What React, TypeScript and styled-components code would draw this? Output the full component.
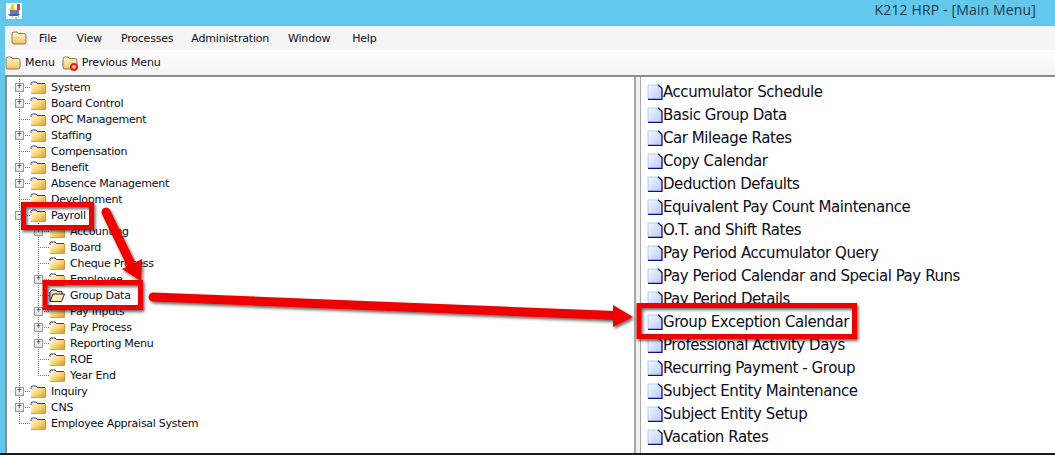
import React from "react";
import styled, { createGlobalStyle } from "styled-components";

const FONT = `"DejaVu Sans", "Noto Sans", sans-serif`;

const treeItems = [
  { label: "System", depth: 0, expander: true },
  { label: "Board Control", depth: 0, expander: true },
  { label: "OPC Management", depth: 0 },
  { label: "Staffing", depth: 0, expander: true },
  { label: "Compensation", depth: 0 },
  { label: "Benefit", depth: 0, expander: true },
  { label: "Absence Management", depth: 0, expander: true },
  { label: "Development", depth: 0 },
  { label: "Payroll", depth: 0, expander: true, open: true },
  { label: "Accounting", depth: 1, expander: true },
  { label: "Board", depth: 1 },
  { label: "Cheque Process", depth: 1 },
  { label: "Employee", depth: 1, expander: true },
  { label: "Group Data", depth: 1, selected: true },
  { label: "Pay Inputs", depth: 1, expander: true },
  { label: "Pay Process", depth: 1, expander: true },
  { label: "Reporting Menu", depth: 1, expander: true },
  { label: "ROE", depth: 1 },
  { label: "Year End", depth: 1, last: true },
  { label: "Inquiry", depth: 0, expander: true },
  { label: "CNS", depth: 0, expander: true },
  { label: "Employee Appraisal System", depth: 0, last: true },
];

const listItems = [
  "Accumulator Schedule",
  "Basic Group Data",
  "Car Mileage Rates",
  "Copy Calendar",
  "Deduction Defaults",
  "Equivalent Pay Count Maintenance",
  "O.T. and Shift Rates",
  "Pay Period Accumulator Query",
  "Pay Period Calendar and Special Pay Runs",
  "Pay Period Details",
  "Group Exception Calendar",
  "Professional Activity Days",
  "Recurring Payment - Group",
  "Subject Entity Maintenance",
  "Subject Entity Setup",
  "Vacation Rates",
];

const menuItems = [
  { label: "File", gap: 12 },
  { label: "View", gap: 20 },
  { label: "Processes", gap: 19 },
  { label: "Administration", gap: 18 },
  { label: "Window", gap: 19 },
  { label: "Help", gap: 22 },
];

const FolderIcon = () => (
  <svg width="16" height="13" viewBox="0 0 16 13">
    <path d="M1 12 V2.5 L2 1.5 H6 L7 3 H15.5 V12 Z" fill="url(#folderFill)" />
    <path d="M1 4 V2.2 L2 1 H6 L7.2 2.5 H15" fill="none" stroke="#3c3c68" strokeWidth="1" />
    <path d="M1 12.5 H15.5 V3" fill="none" stroke="#c08a30" strokeWidth="0.8" />
  </svg>
);

const MenuFolderIcon = () => (
  <svg width="16" height="14" viewBox="0 0 16 14">
    <path d="M1 3 Q1 1 3 1 H6 L7.5 2.5 H13 Q15 2.5 15 4.5 V11 Q15 13 13 13 H3 Q1 13 1 11 Z" fill="url(#menuFolderFill)" stroke="#8f7a4c" />
  </svg>
);

const OpenFolderIcon = () => (
  <svg width="16" height="15" viewBox="0 0 16 15">
    <path d="M1 13 L0.8 4 L3 2 H7 L8 3.5 H13 V6" fill="#f8e67c" stroke="#1c1ca0" />
    <path d="M1 13.5 L4 6 H15.5 L12.5 13.5 Z" fill="#fdf3a4" stroke="#1c1ca0" />
  </svg>
);

const DocumentIcon = () => (
  <svg width="16" height="16" viewBox="0 0 16 16">
    <path d="M1 1 H11.5 L15 4.5 V15 H1 Z" fill="url(#docFill)" />
    <path d="M1 15 V1 H11" fill="none" stroke="#b6cbf0" strokeWidth="1" />
    <path d="M11 0.8 L15 4.5 V15.3 H1" fill="none" stroke="#10108c" strokeWidth="1.3" />
  </svg>
);

const AppLogo = () => (
  <svg width="16" height="16" viewBox="0 0 16 16">
    <rect width="16" height="16" fill="#fff" />
    <path d="M3 8 L6 1 L8 1 L9 8 Z" fill="#dcd43a" />
    <rect x="11" y="1" width="3" height="6" fill="#e03838" />
    <rect x="4" y="7" width="9" height="4" fill="#6f7f98" />
    <path d="M2 11 H14 L12 13 H4 Z" fill="#3d5fb4" />
    <path d="M6 14 h1 M9 15 h2 M12 14 h1" stroke="#4a8ae0" />
  </svg>
);

const RedCircleBadge = styled.span`
  position: absolute;
  right: 0;
  bottom: -1px;
  width: 8px;
  height: 8px;
  border: 2px solid #e8202a;
  border-radius: 50%;
  box-sizing: border-box;
`;

const GlobalStyle = createGlobalStyle`
  html, body {
    margin: 0;
    padding: 0;
    background: #fff;
  }
  #root {
    width: 1055px;
    height: 455px;
    overflow: hidden;
  }
`;

const Page = styled.div`
  position: relative;
  width: 1055px;
  height: 455px;
  display: flex;
  flex-direction: column;
  background: #63c8ec;
  font-family: ${FONT};
  color: #0c0c20;
  overflow: hidden;
  box-sizing: border-box;
  border-bottom: 2px solid #1a1a1a;
`;

const TitleBar = styled.div`
  height: 25px;
  flex: none;
  display: flex;
  align-items: flex-start;
  justify-content: space-between;
  padding: 0 19px 0 6px;
  box-sizing: border-box;
`;

const LogoSlot = styled.span`
  display: flex;
  margin-top: 3px;
`;

const TitleText = styled.div`
  font-family: "Open Sans", sans-serif;
  font-size: 14px;
  line-height: 19px;
  letter-spacing: 0.14px;
  color: #1d3a4a;
`;

const WindowBody = styled.div`
  flex: 1;
  min-height: 0;
  margin-left: 5px;
  display: flex;
  flex-direction: column;
  background: #fff;
`;

const MenuBar = styled.div`
  height: 25px;
  flex: none;
  display: flex;
  align-items: center;
  padding-left: 6px;
  background: #f5f5f5;
  border-top: 1px solid #8fb4c4;
  box-sizing: border-box;
`;

const MenuEntry = styled.span<{ $gap: number }>`
  font-size: 11px;
  letter-spacing: -0.2px;
  margin-left: ${(p) => p.$gap}px;
`;

const ToolBar = styled.div`
  height: 27px;
  flex: none;
  display: flex;
  align-items: center;
  gap: 7px;
  background: linear-gradient(#fefefe, #f4f4f4);
  border-bottom: 2px solid #8c8c8c;
  box-sizing: border-box;
`;

const ToolButton = styled.span`
  display: flex;
  align-items: center;
  gap: 4px;
  font-size: 11px;
  letter-spacing: -0.1px;
`;

const IconSlot = styled.span`
  position: relative;
  display: flex;
`;

const Panels = styled.div`
  flex: 1;
  min-height: 0;
  display: flex;
`;

const TreePanel = styled.div`
  width: 631px;
  flex: none;
  padding: 2px 0 0 3px;
  box-sizing: border-box;
  border-left: 2px solid #8c8c8c;
  border-right: 2px solid #a8a8a8;
`;

const Splitter = styled.div`
  width: 4px;
  flex: none;
  background: #f0f0f0;
  border-right: 1px solid #a8a8a8;
`;

const ListPanel = styled.div`
  flex: 1;
  padding: 3px 0 0 6px;
`;

const TreeRow = styled.div`
  display: flex;
  align-items: center;
  height: 16px;
`;

const dotsV = `repeating-linear-gradient(#777 0 1px, transparent 1px 2px)`;
const dotsH = `repeating-linear-gradient(90deg, #777 0 1px, transparent 1px 2px)`;

const Guide = styled.span`
  width: 19px;
  height: 16px;
  flex: none;
  background: ${dotsV} 9px 0 / 1px 100% no-repeat;
`;

const Connector = styled.span<{ $last?: boolean }>`
  width: 20px;
  height: 16px;
  flex: none;
  display: flex;
  align-items: center;
  box-sizing: border-box;
  padding-left: 5px;
  background:
    ${dotsV} 9px 0 / 1px ${(p) => (p.$last ? "8px" : "16px")} no-repeat,
    ${dotsH} 9px 8px / 11px 1px no-repeat;
`;

const Expander = styled.span`
  width: 9px;
  height: 9px;
  box-sizing: border-box;
  border: 1px solid #9a9a9a;
  background: linear-gradient(#fff, #dedede);
  font-size: 9px;
  line-height: 7px;
  font-family: "Liberation Mono", monospace;
  text-align: center;
  color: #111;
`;

const TreeIcon = styled.span`
  width: 16px;
  flex: none;
  display: flex;
  align-items: center;
  margin-right: 5px;
`;

const TreeLabel = styled.span`
  font-size: 11px;
  white-space: nowrap;
  letter-spacing: -0.26px;
`;

const ListRow = styled.div`
  display: flex;
  align-items: center;
  height: 23px;
`;

const ListLabel = styled.span`
  font-size: 15px;
  white-space: nowrap;
  letter-spacing: -0.44px;
`;

const Overlay = styled.svg`
  position: absolute;
  inset: 0;
  pointer-events: none;
`;

const Defs = styled.svg`
  position: absolute;
  width: 0;
  height: 0;
`;

const RED = "#ee0000";

export default function App() {
  return (
    <Page>
      <GlobalStyle />
      <Defs>
        <defs>
          <linearGradient id="folderFill" x1="0" y1="0" x2="1" y2="1">
            <stop offset="0" stopColor="#fffde4" />
            <stop offset="0.5" stopColor="#fbd880" />
            <stop offset="1" stopColor="#e09a24" />
          </linearGradient>
          <linearGradient id="menuFolderFill" x1="0" y1="0" x2="0" y2="1">
            <stop offset="0" stopColor="#fff8d8" />
            <stop offset="1" stopColor="#f0c460" />
          </linearGradient>
          <linearGradient id="docFill" x1="0" y1="0" x2="1" y2="1">
            <stop offset="0" stopColor="#f4f8ff" />
            <stop offset="1" stopColor="#b8ccf4" />
          </linearGradient>
        </defs>
      </Defs>
      <TitleBar>
        <LogoSlot>
          <AppLogo />
        </LogoSlot>
        <TitleText>K212 HRP - [Main Menu]</TitleText>
      </TitleBar>
      <WindowBody>
        <MenuBar>
          <MenuFolderIcon />
          {menuItems.map((item) => (
            <MenuEntry key={item.label} $gap={item.gap}>
              {item.label}
            </MenuEntry>
          ))}
        </MenuBar>
        <ToolBar>
          <ToolButton>
            <MenuFolderIcon />
            Menu
          </ToolButton>
          <ToolButton>
            <IconSlot>
              <MenuFolderIcon />
              <RedCircleBadge />
            </IconSlot>
            Previous Menu
          </ToolButton>
        </ToolBar>
        <Panels>
          <TreePanel>
            {treeItems.map((item) => (
              <TreeRow key={item.label + item.depth}>
                {item.depth > 0 && <Guide />}
                <Connector $last={item.last}>
                  {item.expander && <Expander>{item.open ? "-" : "+"}</Expander>}
                </Connector>
                <TreeIcon>{item.selected ? <OpenFolderIcon /> : <FolderIcon />}</TreeIcon>
                <TreeLabel>{item.label}</TreeLabel>
              </TreeRow>
            ))}
          </TreePanel>
          <Splitter />
          <ListPanel>
            {listItems.map((label) => (
              <ListRow key={label}>
                <DocumentIcon />
                <ListLabel>{label}</ListLabel>
              </ListRow>
            ))}
          </ListPanel>
        </Panels>
      </WindowBody>
      <Overlay width="1055" height="455" viewBox="0 0 1055 455">
        <defs>
          <filter id="shade" x="-10%" y="-10%" width="120%" height="120%">
            <feDropShadow dx="1.5" dy="2" stdDeviation="1.5" floodColor="#000" floodOpacity="0.6" />
          </filter>
        </defs>
        <g filter="url(#shade)">
          <path d="M106 212 L130 262" stroke={RED} strokeWidth="9" strokeLinecap="round" fill="none" />
          <path d="M122 269 L142 259 L141 281 Z" fill={RED} />
          <path d="M153 297 L615 315.5" stroke={RED} strokeWidth="9" strokeLinecap="round" fill="none" />
          <path d="M613 305 L633 317 L613 327 Z" fill={RED} />
          <rect x="23.5" y="204.5" width="68" height="23" fill="none" stroke={RED} strokeWidth="5" />
          <rect x="45" y="282.5" width="95.5" height="25" fill="none" stroke={RED} strokeWidth="5" />
          <rect x="639" y="305.5" width="215.5" height="31" fill="none" stroke={RED} strokeWidth="5" />
        </g>
      </Overlay>
    </Page>
  );
}
